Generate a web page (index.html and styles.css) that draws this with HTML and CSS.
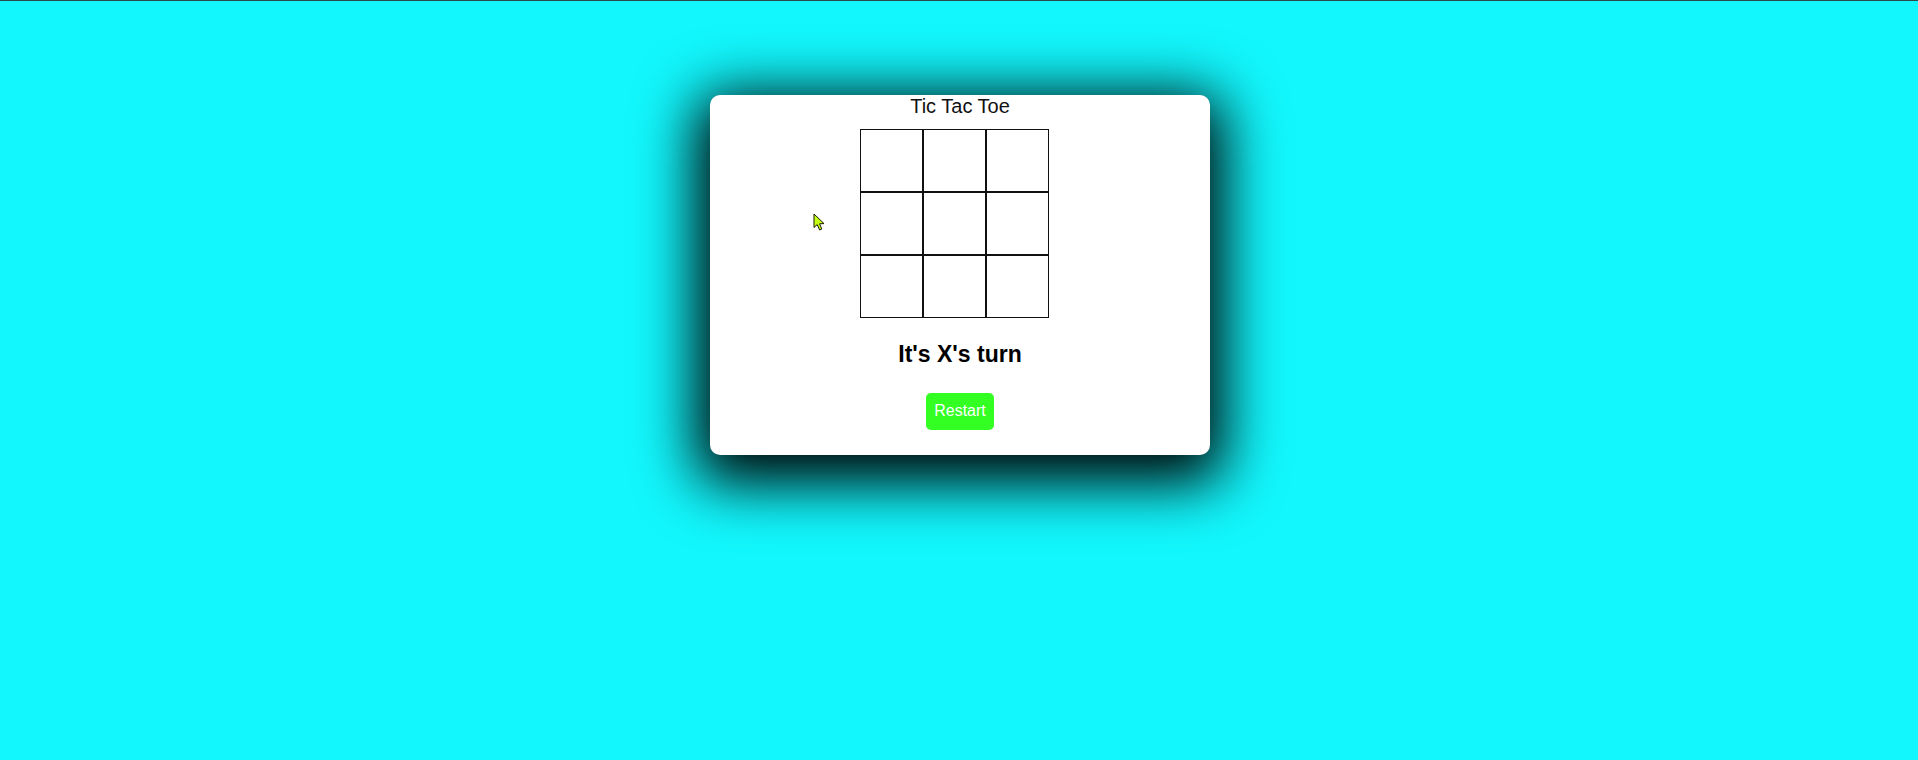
FILE: index.html
```html
<!DOCTYPE html>
<html lang="en">
<head>
<meta charset="utf-8">
<title>Tic Tac Toe</title>
<link rel="stylesheet" href="styles.css">
</head>
<body>
<div class="page">
  <div class="card">
    <div class="title">Tic Tac Toe</div>
    <div class="board-wrap">
      <div class="board">
        <div class="cell"></div><div class="cell"></div><div class="cell"></div>
        <div class="cell"></div><div class="cell"></div><div class="cell"></div>
        <div class="cell"></div><div class="cell"></div><div class="cell"></div>
      </div>
    </div>
    <h2 class="status">It's X's turn</h2>
    <button class="restart">Restart</button>
  </div>
</div>
<svg class="cursor" width="13" height="19" viewBox="0 0 13 19" xmlns="http://www.w3.org/2000/svg">
  <path d="M1 1 L1 14.5 L4.2 11.6 L6.6 17 L8.8 16 L6.5 10.8 L11 10.6 Z" fill="#c4ff12" stroke="#1a1a00" stroke-width="1" stroke-linejoin="round"/>
</svg>
</body>
</html>
```
FILE: styles.css
```css
html, body {
  margin: 0;
  padding: 0;
  height: 100%;
}
body {
  background: #12f7fd;
  border-top: 1px solid #2a4a4c;
  box-sizing: border-box;
  font-family: "Liberation Sans", Arial, sans-serif;
  color: #000;
  position: relative;
}
.page {
  display: flex;
  justify-content: center;
  padding-top: 94px;
  padding-left: 2px;
}
.card {
  width: 500px;
  height: 360px;
  background: #fff;
  border-radius: 10px;
  box-shadow: 0 14px 60px 14px #000;
  display: flex;
  flex-direction: column;
  align-items: center;
  box-sizing: border-box;
}
.title {
  font-size: 20px;
  line-height: 23px;
  color: #111;
}
.board-wrap {
  width: 201px;
  margin-top: 11px;
}
.board {
  display: grid;
  grid-template-columns: repeat(3, 63px);
  grid-template-rows: repeat(3, 63px);
}
.cell {
  border: 1px solid #111;
  background: #fff;
}
.status {
  font-size: 23px;
  font-weight: bold;
  line-height: 27px;
  margin: 23px 0 0 0;
}
.restart {
  margin-top: 25px;
  background: #33ff22;
  color: #fff;
  border: none;
  border-radius: 5px;
  font-family: "Liberation Sans", Arial, sans-serif;
  font-size: 16px;
  line-height: 18px;
  padding: 9px 8px 10px;
  width: 68px;
  height: 37px;
}
.cursor {
  position: absolute;
  left: 813px;
  top: 212px;
}
```
